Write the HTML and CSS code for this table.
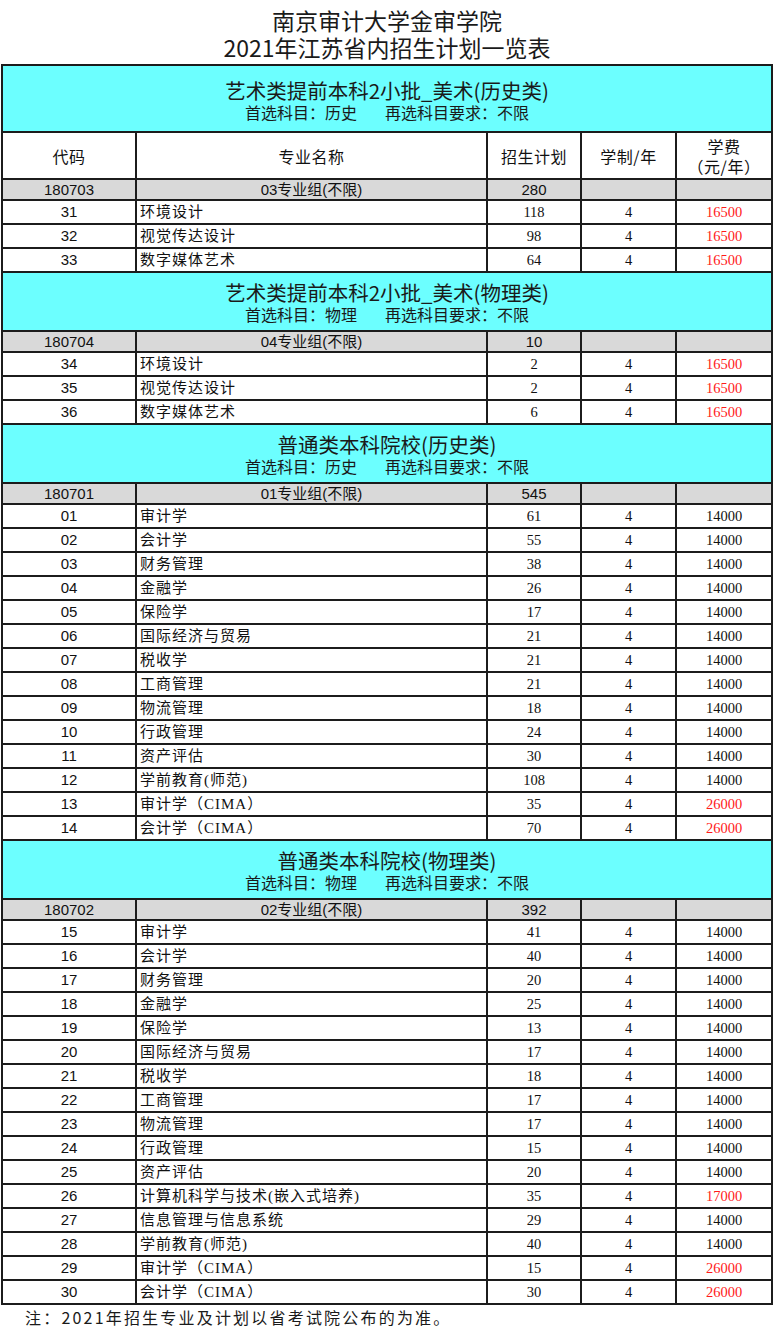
FILE: index.html
```html
<!DOCTYPE html>
<html lang="zh-CN">
<head>
<meta charset="utf-8">
<title>南京审计大学金审学院 2021年江苏省内招生计划一览表</title>
<link rel="stylesheet" href="styles.css">
</head>
<body>
<div class="page">
  <h1 class="title">
    <span class="title-line">南京审计大学金审学院</span>
    <span class="title-line">2021年江苏省内招生计划一览表</span>
  </h1>
  <table class="plan">
    <colgroup>
      <col class="c-code"><col class="c-name"><col class="c-plan"><col class="c-year"><col class="c-fee">
    </colgroup>
    <tbody>
      <tr class="section first">
        <td colspan="5">
          <div class="sec-main">艺术类提前本科2小批_美术(历史类)</div>
          <div class="sec-sub"><span>首选科目：历史</span><span class="gap">再选科目要求：不限</span></div>
        </td>
      </tr>
      <tr class="head">
        <td>代码</td><td>专业名称</td><td>招生计划</td><td>学制/年</td><td>学费<br>（元/年）</td>
      </tr>
      <tr class="group"><td>180703</td><td>03专业组(不限)</td><td>280</td><td></td><td></td></tr>
      <tr class="row"><td class="code">31</td><td class="name">环境设计</td><td class="num">118</td><td class="num">4</td><td class="num red">16500</td></tr>
      <tr class="row"><td class="code">32</td><td class="name">视觉传达设计</td><td class="num">98</td><td class="num">4</td><td class="num red">16500</td></tr>
      <tr class="row"><td class="code">33</td><td class="name">数字媒体艺术</td><td class="num">64</td><td class="num">4</td><td class="num red">16500</td></tr>

      <tr class="section">
        <td colspan="5">
          <div class="sec-main">艺术类提前本科2小批_美术(物理类)</div>
          <div class="sec-sub"><span>首选科目：物理</span><span class="gap">再选科目要求：不限</span></div>
        </td>
      </tr>
      <tr class="group"><td>180704</td><td>04专业组(不限)</td><td>10</td><td></td><td></td></tr>
      <tr class="row"><td class="code">34</td><td class="name">环境设计</td><td class="num">2</td><td class="num">4</td><td class="num red">16500</td></tr>
      <tr class="row"><td class="code">35</td><td class="name">视觉传达设计</td><td class="num">2</td><td class="num">4</td><td class="num red">16500</td></tr>
      <tr class="row"><td class="code">36</td><td class="name">数字媒体艺术</td><td class="num">6</td><td class="num">4</td><td class="num red">16500</td></tr>

      <tr class="section">
        <td colspan="5">
          <div class="sec-main">普通类本科院校(历史类)</div>
          <div class="sec-sub"><span>首选科目：历史</span><span class="gap">再选科目要求：不限</span></div>
        </td>
      </tr>
      <tr class="group"><td>180701</td><td>01专业组(不限)</td><td>545</td><td></td><td></td></tr>
      <tr class="row"><td class="code">01</td><td class="name">审计学</td><td class="num">61</td><td class="num">4</td><td class="num">14000</td></tr>
      <tr class="row"><td class="code">02</td><td class="name">会计学</td><td class="num">55</td><td class="num">4</td><td class="num">14000</td></tr>
      <tr class="row"><td class="code">03</td><td class="name">财务管理</td><td class="num">38</td><td class="num">4</td><td class="num">14000</td></tr>
      <tr class="row"><td class="code">04</td><td class="name">金融学</td><td class="num">26</td><td class="num">4</td><td class="num">14000</td></tr>
      <tr class="row"><td class="code">05</td><td class="name">保险学</td><td class="num">17</td><td class="num">4</td><td class="num">14000</td></tr>
      <tr class="row"><td class="code">06</td><td class="name">国际经济与贸易</td><td class="num">21</td><td class="num">4</td><td class="num">14000</td></tr>
      <tr class="row"><td class="code">07</td><td class="name">税收学</td><td class="num">21</td><td class="num">4</td><td class="num">14000</td></tr>
      <tr class="row"><td class="code">08</td><td class="name">工商管理</td><td class="num">21</td><td class="num">4</td><td class="num">14000</td></tr>
      <tr class="row"><td class="code">09</td><td class="name">物流管理</td><td class="num">18</td><td class="num">4</td><td class="num">14000</td></tr>
      <tr class="row"><td class="code">10</td><td class="name">行政管理</td><td class="num">24</td><td class="num">4</td><td class="num">14000</td></tr>
      <tr class="row"><td class="code">11</td><td class="name">资产评估</td><td class="num">30</td><td class="num">4</td><td class="num">14000</td></tr>
      <tr class="row"><td class="code">12</td><td class="name">学前教育(师范)</td><td class="num">108</td><td class="num">4</td><td class="num">14000</td></tr>
      <tr class="row"><td class="code">13</td><td class="name">审计学（CIMA）</td><td class="num">35</td><td class="num">4</td><td class="num red">26000</td></tr>
      <tr class="row"><td class="code">14</td><td class="name">会计学（CIMA）</td><td class="num">70</td><td class="num">4</td><td class="num red">26000</td></tr>

      <tr class="section">
        <td colspan="5">
          <div class="sec-main">普通类本科院校(物理类)</div>
          <div class="sec-sub"><span>首选科目：物理</span><span class="gap">再选科目要求：不限</span></div>
        </td>
      </tr>
      <tr class="group"><td>180702</td><td>02专业组(不限)</td><td>392</td><td></td><td></td></tr>
      <tr class="row"><td class="code">15</td><td class="name">审计学</td><td class="num">41</td><td class="num">4</td><td class="num">14000</td></tr>
      <tr class="row"><td class="code">16</td><td class="name">会计学</td><td class="num">40</td><td class="num">4</td><td class="num">14000</td></tr>
      <tr class="row"><td class="code">17</td><td class="name">财务管理</td><td class="num">20</td><td class="num">4</td><td class="num">14000</td></tr>
      <tr class="row"><td class="code">18</td><td class="name">金融学</td><td class="num">25</td><td class="num">4</td><td class="num">14000</td></tr>
      <tr class="row"><td class="code">19</td><td class="name">保险学</td><td class="num">13</td><td class="num">4</td><td class="num">14000</td></tr>
      <tr class="row"><td class="code">20</td><td class="name">国际经济与贸易</td><td class="num">17</td><td class="num">4</td><td class="num">14000</td></tr>
      <tr class="row"><td class="code">21</td><td class="name">税收学</td><td class="num">18</td><td class="num">4</td><td class="num">14000</td></tr>
      <tr class="row"><td class="code">22</td><td class="name">工商管理</td><td class="num">17</td><td class="num">4</td><td class="num">14000</td></tr>
      <tr class="row"><td class="code">23</td><td class="name">物流管理</td><td class="num">17</td><td class="num">4</td><td class="num">14000</td></tr>
      <tr class="row"><td class="code">24</td><td class="name">行政管理</td><td class="num">15</td><td class="num">4</td><td class="num">14000</td></tr>
      <tr class="row"><td class="code">25</td><td class="name">资产评估</td><td class="num">20</td><td class="num">4</td><td class="num">14000</td></tr>
      <tr class="row"><td class="code">26</td><td class="name">计算机科学与技术(嵌入式培养)</td><td class="num">35</td><td class="num">4</td><td class="num red">17000</td></tr>
      <tr class="row"><td class="code">27</td><td class="name">信息管理与信息系统</td><td class="num">29</td><td class="num">4</td><td class="num">14000</td></tr>
      <tr class="row"><td class="code">28</td><td class="name">学前教育(师范)</td><td class="num">40</td><td class="num">4</td><td class="num">14000</td></tr>
      <tr class="row"><td class="code">29</td><td class="name">审计学（CIMA）</td><td class="num">15</td><td class="num">4</td><td class="num red">26000</td></tr>
      <tr class="row"><td class="code">30</td><td class="name">会计学（CIMA）</td><td class="num">30</td><td class="num">4</td><td class="num red">26000</td></tr>
    </tbody>
  </table>
  <p class="note">注：2021年招生专业及计划以省考试院公布的为准。</p>
</div>
</body>
</html>
```

FILE: styles.css
```css
html, body {
  margin: 0;
  padding: 0;
  background: #ffffff;
}

body {
  font-family: "Liberation Sans", "Noto Sans CJK SC", sans-serif;
  color: #111111;
}

.page {
  width: 774px;
}

.title {
  margin: 0;
  padding-top: 7px;
  font-size: 23px;
  font-weight: 400;
  line-height: 27px;
  text-align: center;
  color: #1a1a1a;
  font-family: "Noto Sans CJK SC", sans-serif;
}

.title-line {
  display: block;
}

.plan {
  margin: 3px 0 0 1px;
  width: 770px;
  border-collapse: collapse;
  table-layout: fixed;
  border: 2px solid #1c1c1c;
}

.c-code { width: 134px; }
.c-name { width: 351px; }
.c-plan { width: 94px; }
.c-year { width: 95px; }
.c-fee { width: 96px; }

.plan td {
  border: 2px solid #1c1c1c;
  padding: 0;
  text-align: center;
  vertical-align: middle;
}

.section td {
  background: #6cffff;
  height: 56px;
  padding-top: 1px;
}

.section.first td {
  height: 61px;
  padding-top: 4px;
}

.sec-main {
  font-family: "Noto Sans CJK SC", sans-serif;
  font-size: 20.5px;
  line-height: 23px;
  color: #1a1a1a;
}

.sec-sub {
  font-family: "Noto Sans CJK SC", sans-serif;
  font-size: 16px;
  line-height: 20px;
  color: #1a1a1a;
}

.sec-sub .gap {
  margin-left: 28px;
}

.head td {
  height: 45px;
  font-family: "Noto Sans CJK SC", sans-serif;
  font-size: 16px;
  line-height: 20px;
  letter-spacing: 0.5px;
}

.group td {
  background: #d9d9d9;
  height: 19px;
  font-size: 15px;
  line-height: 18px;
}

.row td {
  height: 22px;
  font-size: 15px;
  line-height: 20px;
}

.row .code {
  font-family: "Liberation Sans", "Noto Sans CJK SC", sans-serif;
}

.row .name {
  text-align: left;
  padding-left: 3px;
  font-family: "Liberation Serif", "Noto Sans CJK SC", serif;
  letter-spacing: 1px;
}

.row .num {
  font-family: "Liberation Serif", "Noto Sans CJK SC", serif;
  font-size: 14.5px;
}

.row .red {
  color: #ff1a1a;
}

.note {
  margin: 0;
  padding: 1px 0 0 25px;
  font-family: "Noto Sans CJK SC", sans-serif;
  font-size: 16px;
  line-height: 22px;
  letter-spacing: 2.2px;
  color: #1a1a1a;
}
```
